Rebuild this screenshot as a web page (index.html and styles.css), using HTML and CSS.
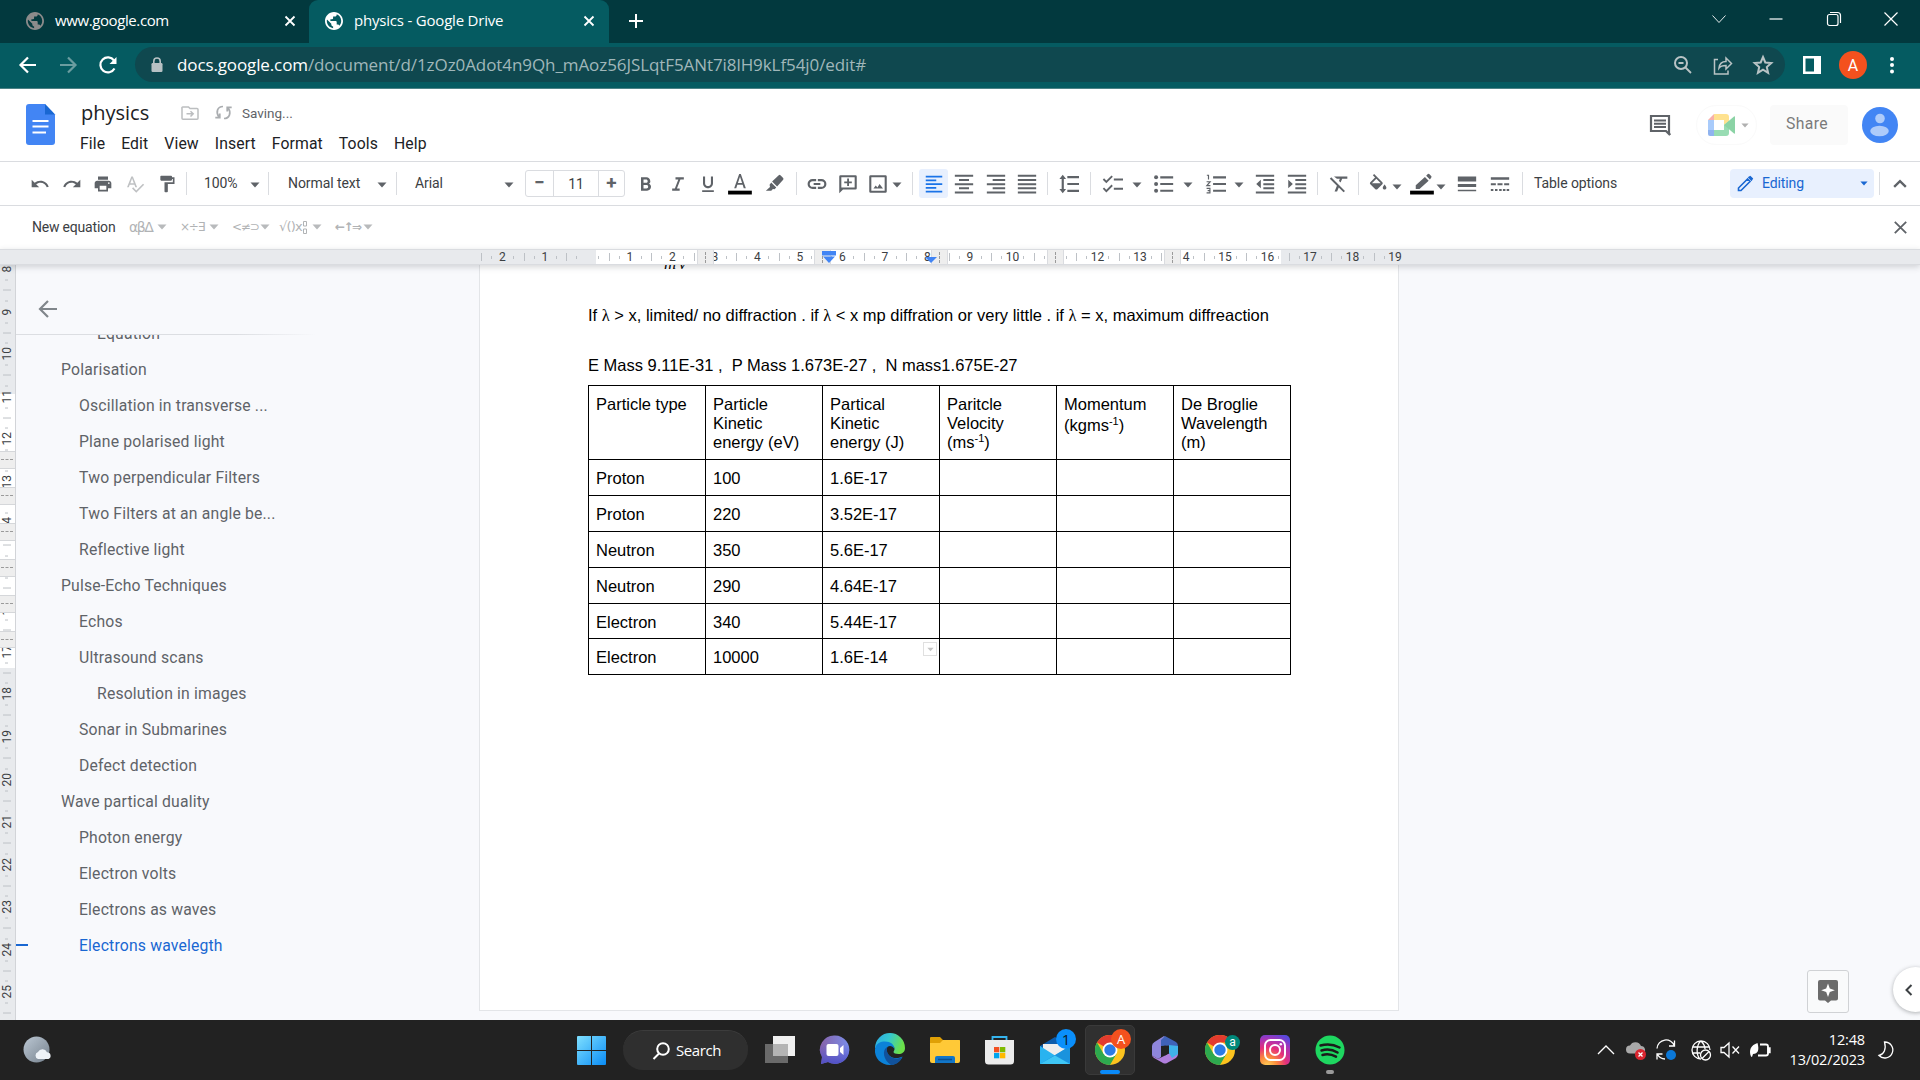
FILE: index.html
```html
<!DOCTYPE html>
<html lang="en">
<head>
<meta charset="utf-8">
<title>physics - Google Drive</title>
<link rel="stylesheet" href="styles.css">
</head>
<body>
<svg class="sprite" aria-hidden="true">
  <symbol id="globe" viewBox="2 2 20 20"><path fill="currentColor" d="M12 2C6.480 2 2 6.480 2 12s4.480 10 10 10 10-4.480 10-10S17.520 2 12 2zm-1 17.930c-3.950-.49-7-3.850-7-7.930 0-.62.080-1.210.210-1.790L9 15v1c0 1.100.9 2 2 2v1.930zm6.900-2.540c-.26-.81-1-1.390-1.900-1.390h-1v-3c0-.55-.45-1-1-1H8v-2h2c.55 0 1-.45 1-1V7h2c1.100 0 2-.9 2-2v-.41c2.930 1.190 5 4.060 5 7.410 0 2.080-.8 3.970-2.100 5.390z"/></symbol>
  <symbol id="caret" viewBox="0 0 10 6"><path d="M0.500 0.500h9L5 5.500z" fill="currentColor"/></symbol>
  <symbol id="chrome" viewBox="0 0 30 30"><circle cx="15" cy="15" r="15" fill="#fcc31e"/><path d="M15 15 2 7.500A15 15 0 0 1 28 7.500H15z" fill="#e33b2e"/><path d="M2 7.500A15 15 0 0 0 15 30l6.500-11.200L15 15 8.500 18.800z" fill="#2da94f"/><circle cx="15" cy="15" r="7.500" fill="#fff"/><circle cx="15" cy="15" r="5.700" fill="#2c7be5"/></symbol>
</svg>

<header class="tabstrip">
  <div class="tab">
    <svg class="favicon dim"><use href="#globe"/></svg><span class="tab-title">www.google.com</span>
    <svg class="tab-close" viewBox="0 0 10 10"><path d="M.5.5l9 9M9.500.5l-9 9"/></svg>
  </div>
  <div class="tab active">
    <svg class="favicon"><use href="#globe"/></svg><span class="tab-title">physics - Google Drive</span>
    <svg class="tab-close" viewBox="0 0 10 10"><path d="M.5.5l9 9M9.500.5l-9 9"/></svg>
  </div>
  <svg class="new-tab" viewBox="0 0 14 14"><path d="M7 0v14M0 7h14"/></svg>
  <div class="window-controls">
    <svg viewBox="0 0 16 16"><path d="M1.500 4.500 8 11.500l6.500-7"/></svg>
    <svg viewBox="0 0 16 16"><path d="M1.500 8h13"/></svg>
    <svg viewBox="0 0 16 16"><rect x="1.500" y="3.500" width="10.500" height="11" rx="2"/><path d="M4 1.500h7.500a3 3 0 0 1 3 3V12"/></svg>
    <svg viewBox="0 0 16 16"><path d="M1.500 1.500l13 13M14.500 1.500l-13 13"/></svg>
  </div>
</header>

<div class="addressbar">
  <svg class="nav" viewBox="0 0 20 20"><path d="M18 10H3M10 2.500 2.500 10l7.500 7.500"/></svg>
  <svg class="nav faded" viewBox="0 0 20 20"><path d="M2 10h15M10 2.500 17.500 10 10 17.500"/></svg>
  <svg class="nav" viewBox="0 0 20 20"><path d="M16.500 13.500A7.500 7.500 0 1 1 16 5.500"/><path d="M18.500 2v7h-7z" fill="#fff" stroke="none"/></svg>
  <div class="omnibox">
    <svg class="lock" viewBox="0 0 12 16"><path d="M2.800 7V4.200a3.200 3.200 0 0 1 6.400 0V7" fill="none" stroke="#b7c1c4" stroke-width="1.600"/><rect x=".5" y="6" width="11" height="9" rx="1.200" fill="#b7c1c4"/></svg>
    <span class="url"><b>docs.google.com</b>/document/d/1zOz0Adot4n9Qh_mAoz56JSLqtF5ANt7i8lH9kLf54j0/edit#</span>
    <div class="omni-icons">
      <svg viewBox="0 0 20 20"><circle cx="8" cy="8" r="6"/><path d="M12.500 12.500 18 18M5.500 8h5" stroke-width="1.800"/></svg>
      <svg viewBox="0 0 20 20"><path d="M5 4.500H1.500V19H15v-3.500M6 13c.5-4.500 3-6.500 7-6.500V3l5.500 5.500L13 14v-3.500c-3.500 0-5.500.5-7 2.500z" stroke-width="1.500"/></svg>
      <svg viewBox="0 0 20 20"><path d="M10 2l2.300 5.500 6 .5-4.500 4 1.300 5.800L10 14.700l-5.100 3.100L6.200 12 1.700 8l6-.5z"/></svg>
    </div>
  </div>
  <svg class="panel-icon" viewBox="0 0 18 18"><path d="M0 0h18v18H0zM2.500 2.500v13H11v-13z" fill="#fff" fill-rule="evenodd"/></svg>
  <span class="profile">A</span>
  <svg class="dots" viewBox="0 0 4 18"><circle cx="2" cy="3" r="2"/><circle cx="2" cy="9" r="2"/><circle cx="2" cy="15.500" r="2"/></svg>
</div>

<section class="doc-header">
  <svg class="docs-logo" viewBox="0 0 29 41"><path d="M3 0h16l10 10.500V38a3 3 0 0 1-3 3H3a3 3 0 0 1-3-3V3a3 3 0 0 1 3-3z" fill="#4285f4"/><path d="M19 0l10 10.500H19z" fill="#1967d2"/><path d="M6.500 17H22.500M6.500 22.500H22.500M6.500 28.500H20" stroke="#fff" stroke-width="2.200"/></svg>
  <div class="title-block">
    <div class="title-row">
      <span class="doc-title">physics</span>
      <svg class="move-icon" viewBox="0 0 18 14"><path d="M1 2.500V12.200a1 1 0 0 0 1 1h14a1 1 0 0 0 1-1V3.500a1 1 0 0 0-1-1H9L7.500 1H2a1 1 0 0 0-1 1.500zM5.500 7.800h6.500M9.500 5.200 12.200 7.800 9.500 10.500"/></svg>
      <svg class="sync-icon" viewBox="0 0 17 15"><path d="M8 1.500C2.500 1.500.5 7 3.800 12M0.300 12.700h4.500v-4.200M9 13.500c5.500 0 7.500-5.500 4.200-10.500M16.700 2.300h-4.500v4.200"/></svg>
      <span class="saving">Saving...</span>
    </div>
    <nav class="menus"><span>File</span><span>Edit</span><span>View</span><span>Insert</span><span>Format</span><span>Tools</span><span>Help</span></nav>
  </div>
  <div class="header-actions">
    <svg class="comments" viewBox="0 0 24 24"><path d="M22 22l-4-4H3V3h18v17z" fill="none" stroke="#5f6368" stroke-width="2.200"/><path d="M6 7.500h12M6 10.700h12M6 14h12" stroke="#5f6368" stroke-width="2"/></svg>
    <div class="meet">
      <svg class="meet-logo" viewBox="0 0 27 22"><path d="M6 0v6H0z" fill="#f8b0aa"/><path d="M6 0h12a3 3 0 0 1 3 3v4l-5 4V6H6z" fill="#ffe28f"/><path d="M0 6h6v10H0z" fill="#a9cbfb"/><path d="M0 16h6v6H2a2 2 0 0 1-2-2z" fill="#8fb3ef"/><path d="M6 16h10v-5l5-4v12a3 3 0 0 1-3 3H6z" fill="#98dcb3"/><path d="M16 11l10-8.500q1-.5 1 .5v16q0 1-1 .5z" fill="#8bd3a5"/></svg>
      <svg class="caret-s"><use href="#caret"/></svg>
    </div>
    <button class="share">Share</button>
    <svg class="avatar" viewBox="0 0 36 36"><circle cx="18" cy="18" r="18" fill="#4285f4"/><circle cx="18" cy="11.500" r="4.800" fill="#aecbfa"/><ellipse cx="17.500" cy="24" rx="9.300" ry="5.200" fill="#aecbfa"/></svg>
  </div>
</section>

<div class="toolbar">
  <svg class="ic" viewBox="0 0 24 24"><path d="M12.500 8c-2.650 0-5.050.99-6.900 2.600L2 7v9h9l-3.620-3.620c1.390-1.160 3.160-1.880 5.120-1.880 3.540 0 6.550 2.310 7.600 5.500l2.370-.78C21.080 11.030 17.150 8 12.500 8z"/></svg>
  <svg class="ic" viewBox="0 0 24 24"><path d="M18.400 10.600C16.550 8.990 14.150 8 11.500 8c-4.650 0-8.580 3.030-9.960 7.220L3.900 16c1.050-3.190 4.050-5.500 7.600-5.500 1.950 0 3.730.72 5.120 1.880L13 16h9V7l-3.600 3.600z"/></svg>
  <svg class="ic" viewBox="0 0 24 24"><path d="M19 8H5c-1.660 0-3 1.340-3 3v6h4v4h12v-4h4v-6c0-1.660-1.340-3-3-3zm-3 11H8v-5h8v5zm3-7c-.55 0-1-.45-1-1s.45-1 1-1 1 .45 1 1-.45 1-1 1zm-1-9H6v4h12V3z"/></svg>
  <svg class="ic light" viewBox="0 0 24 24"><path d="M12.450 16h2.090L9.430 3H7.570L2.460 16h2.090l1.120-3h5.640l1.140 3zm-6.020-5L8.500 5.480 10.570 11H6.430zm15.160.59l-8.090 8.090L9.830 16l-1.410 1.410 5.090 5.090L23 13l-1.410-1.410z"/></svg>
  <svg class="ic" viewBox="0 0 24 24"><path d="M18 4V3c0-.55-.45-1-1-1H5c-.55 0-1 .45-1 1v4c0 .55.450 1 1 1h12c.55 0 1-.45 1-1V6h1v4H9v11c0 .55.450 1 1 1h2c.55 0 1-.45 1-1v-9h8V4h-3z"/></svg>
  <i class="div"></i>
  <span>100%</span><svg class="caret"><use href="#caret"/></svg>
  <i class="div"></i>
  <span>Normal text</span><svg class="caret"><use href="#caret"/></svg>
  <i class="div"></i>
  <span>Arial</span><svg class="caret"><use href="#caret"/></svg>
  <div class="size-box"><b>−</b><span>11</span><b>+</b></div>
  <svg class="ic" viewBox="0 0 24 24"><path d="M15.600 11.800c1-.7 1.600-1.800 1.600-2.800 0-2.800-2-5-4.700-5H6v16h7.300c2.700 0 4.700-2.200 4.700-4.700 0-1.500-.9-2.800-2.400-3.500zM9 6.600h3c1.200 0 2 .8 2 2s-.8 2-2 2H9zm3.600 10.700H9v-4h3.600c1.200 0 2 .8 2 2s-.8 2-2 2z"/></svg>
  <svg class="ic" viewBox="0 0 24 24"><path d="M9 4v2.600h3.400L8.200 17.400H5V20h9v-2.600h-3.300l4.200-10.800H19V4z"/></svg>
  <svg class="ic" viewBox="0 0 24 24"><path d="M12 17c3.310 0 6-2.690 6-6V3h-2.500v8c0 1.930-1.570 3.500-3.500 3.500S8.500 12.930 8.500 11V3H6v8c0 3.310 2.690 6 6 6zm-7 2.500v2h14v-2H5z"/></svg>
  <svg class="ic bar" viewBox="0 0 24 24"><path d="M11 0L5 17h2.500l1.300-4h6.400l1.300 4H19L13 0h-2zm-1.500 10.700L12 3.200l2.500 7.500z"/><path d="M-2.300 20h28.500v4.600H-2.300z" fill="#000"/></svg>
  <svg class="ic" viewBox="0 0 24 24"><path d="M21.500 4.500 18.500 1.500q-1-1-2 0L8.500 9l6 6 7.300-8.200q1-1.200-.3-2.300zM7.500 10.200 5.500 13l.5 2.500L1 20h6.500l2-2 2 .3 2-2.200z"/></svg>
  <i class="div"></i>
  <svg class="ic" viewBox="0 0 24 24"><path d="M3.300 12c0-1.900 1.500-3.400 3.400-3.400H11V6H6.700a6 6 0 0 0 0 12H11v-2.600H6.700A3.400 3.400 0 0 1 3.300 12zM8 13.200h8v-2.400H8zM17.300 6H13v2.600h4.300a3.400 3.400 0 0 1 0 6.800H13V18h4.300a6 6 0 0 0 0-12z"/></svg>
  <svg class="ic" viewBox="0 0 24 24"><path d="M3 1.500h18a1.500 1.500 0 0 1 1.500 1.500v14a1.500 1.500 0 0 1-1.500 1.500H6L1.500 23V3A1.500 1.500 0 0 1 3 1.500zm1 2.300v12.400h16V3.800zM11 5.500h2.200v3.400h3.400V11h-3.400v3.500H11V11H7.500V8.900H11z" fill-rule="evenodd"/></svg>
  <svg class="ic" viewBox="0 0 24 24"><path d="M3.500 1.500h17A1.700 1.700 0 0 1 22.500 3v18a1.700 1.700 0 0 1-2 1.500h-17A1.700 1.700 0 0 1 1.500 21V3a1.700 1.700 0 0 1 2-1.500zM4 4v16h16V4zm2.500 13.500 2.800-3.800 2 2.400 2.600-4L18 17.500z" fill-rule="evenodd"/></svg>
  <svg class="caret"><use href="#caret"/></svg>
  <i class="div"></i>
  <div class="pressed"><svg class="ic" viewBox="0 0 24 24"><path d="M1 1h22v2.400H1zM1 6h14v2.400H1zM1 11h22v2.400H1zM1 16h14v2.400H1zM1 21h22v2.400H1z"/></svg></div>
  <svg class="ic" viewBox="0 0 24 24"><path d="M1 1h22v2.400H1zM6 6h12v2.400H6zM1 11h22v2.400H1zM6 16h12v2.400H6zM1 21h22v2.400H1z"/></svg>
  <svg class="ic" viewBox="0 0 24 24"><path d="M1 1h22v2.400H1zM8 6h15v2.400H8zM1 11h22v2.400H1zM8 16h15v2.400H8zM1 21h22v2.400H1z"/></svg>
  <svg class="ic" viewBox="0 0 24 24"><path d="M1 1h22v2.400H1zM1 6h22v2.400H1zM1 11h22v2.400H1zM1 16h22v2.400H1zM1 21h22v2.400H1z"/></svg>
  <i class="div"></i>
  <svg class="ic" viewBox="0 0 24 24"><path d="M4.500 1 .5 6h2.700v12H.5l4 5 4-5H5.800V6h2.700zM10 2.500h14V5H10zM10 10.700h14v2.500H10zM10 19h14v2.500H10z"/></svg>
  <i class="div"></i>
  <svg class="ic" viewBox="0 0 24 24"><path d="M13 5.500h11v2.300H13zM13 16.500h11v2.300H13z"/><path d="M.5 6l3.500 3.500L11 2.500M.5 17l3.500 3.500 7-7" fill="none" stroke="currentColor" stroke-width="2.200"/></svg>
  <svg class="caret"><use href="#caret"/></svg>
  <svg class="ic" viewBox="0 0 24 24"><circle cx="2.500" cy="4" r="2.400"/><circle cx="2.500" cy="12" r="2.400"/><circle cx="2.500" cy="20" r="2.400"/><path d="M7.500 2.800H23v2.500H7.500zM7.500 10.800H23v2.500H7.500zM7.500 18.800H23v2.500H7.500z"/></svg>
  <svg class="caret"><use href="#caret"/></svg>
  <svg class="ic" viewBox="0 0 24 24"><path d="M8.500 2.800H24v2.500H8.500zM8.500 10.800H24v2.500H8.500zM8.500 18.800H24v2.500H8.500z"/><path d="M1 1.500h2V6.500M.7 9.300H5L1 14h4.300M.7 17.300h4v5.400h-4M2 20h2.500" fill="none" stroke="currentColor" stroke-width="1.400"/></svg>
  <svg class="caret"><use href="#caret"/></svg>
  <svg class="ic" viewBox="0 0 24 24"><path d="M1 1h22v2.400H1zM10 6h13v2.400H10zM10 11h13v2.400H10zM10 16h13v2.400H10zM1 21h22v2.400H1zM7 7v10L1.500 12z"/></svg>
  <svg class="ic" viewBox="0 0 24 24"><path d="M1 1h22v2.400H1zM10 6h13v2.400H10zM10 11h13v2.400H10zM10 16h13v2.400H10zM1 21h22v2.400H1zM1.500 7v10L7 12z"/></svg>
  <i class="div"></i>
  <svg class="ic" viewBox="0 0 24 24"><path d="M6 3h16v2.700h-6.200l-1.900 4.500L12 8.300l1-2.600h-3.500zM2.700 4 1 5.700l8.500 8.400L6.700 21h3l2-4.800L17.500 22l1.700-1.700z"/></svg>
  <i class="div"></i>
  <svg class="ic" viewBox="0 0 24 24"><path d="M16.560 8.940L7.620 0 6.210 1.410l2.380 2.380-5.150 5.150c-.59.59-.59 1.540 0 2.120l5.500 5.500c.29.290.680.440 1.060.44s.770-.15 1.060-.44l5.500-5.500c.59-.58.590-1.530 0-2.120zM5.210 10L10 5.210 14.790 10zM19 11.500s-2 2.170-2 3.500c0 1.100.9 2 2 2s2-.9 2-2c0-1.330-2-3.500-2-3.500z" transform="translate(-1 0) scale(1.100)"/></svg>
  <svg class="caret low"><use href="#caret"/></svg>
  <svg class="ic bar" viewBox="0 0 24 24"><path d="M15.500 3.500 20 8 9 18H4.500v-4.500zM17 2l2-2q1-.7 2 .3L23 2.500q1 1 0 2L21.500 6.500z"/><path d="M-2.300 20h28.500v4.600H-2.300z" fill="#000"/></svg>
  <svg class="caret low"><use href="#caret"/></svg>
  <svg class="ic" viewBox="0 0 24 24"><path d="M1 3h22v6H1zM1 12h22v3.500H1zM1 19h22v1.800H1z"/></svg>
  <svg class="ic" viewBox="0 0 24 24"><path d="M1 4h22v3H1zM1 11h6v2.500H1zM9 11h6v2.500H9zM17 11h6v2.500h-6zM1 18h3v2.500H1zM6 18h3v2.500H6zM11 18h3v2.500h-3zM15.500 18h3v2.500h-3zM20 18h3v2.500h-3z"/></svg>
  <i class="div"></i>
  <span>Table options</span>
  <div class="mode">
    <svg viewBox="0 0 16 16"><path d="M10.500 3 1.500 12v2.500H4l9-9zM12 1.500l1.200-.8 2 2-.8 1.300z"/></svg><span>Editing</span><svg class="caret-s"><use href="#caret"/></svg>
  </div>
  <i class="div"></i>
  <svg class="ic" viewBox="0 0 24 24"><path d="M5 15.500l7-7 7 7" fill="none" stroke="currentColor" stroke-width="2.800"/></svg>
</div>

<div class="equation-bar">
  <span class="new-eq">New equation</span>
  <span class="pal">αβΔ</span><svg class="caret"><use href="#caret"/></svg>
  <span class="pal tight">×÷∃</span><svg class="caret"><use href="#caret"/></svg>
  <span class="pal tight">&lt;≠⊃</span><svg class="caret"><use href="#caret"/></svg>
  <span class="pal root">√()x<svg class="boxes" viewBox="0 0 4 13"><path d="M.5.5h3v4.500h-3zM.5 8h3v4.500h-3z"/></svg></span><svg class="caret"><use href="#caret"/></svg>
  <span class="pal bold">←↑⇒</span><svg class="caret"><use href="#caret"/></svg>
  <svg class="eq-close" viewBox="0 0 13 13"><path d="M.8.8l11.400 11.400M12.200.8.8 12.200"/></svg>
</div>

<div class="hruler">
  <span>2</span><span>1</span><span></span><span>1</span><span>2</span><span>3</span><span>4</span><span>5</span><span>6</span><span>7</span><span>8</span><span>9</span><span>10</span><span></span><span>12</span><span>13</span><span class="fourteen">4</span><span>15</span><span>16</span><span>17</span><span>18</span><span class="end">19</span>
  <i class="col-mark m1"></i><i class="col-mark m2"></i><i class="col-mark m3"></i><i class="col-mark m4"></i><i class="col-mark m5"></i>
  <svg class="indent-l" viewBox="0 0 14 12"><path d="M0 0h14v4.500H0zM1 5.500h12L7 12z"/></svg>
  <svg class="indent-r" viewBox="0 0 12 6"><path d="M0 0h12L6 6z"/></svg>
</div>

<main class="workspace">
  <div class="vruler">
    <span>8</span><span>9</span><span>10</span><span>11</span><span>12</span><span>13</span><span>14</span><span></span><span>16</span><span>17</span><span>18</span><span>19</span><span>20</span><span>21</span><span>22</span><span>23</span><span>24</span><span>25</span><span></span>
    <div class="row-marks"><i></i><i></i><i></i><i></i><i></i><i></i></div>
  </div>
  <aside class="outline">
    <div class="outline-head"><svg viewBox="0 0 20 20"><path d="M19 10H2.500M10 2 2 10l8 8"/></svg></div>
    <ul>
      <li class="l3">Equation</li>
      <li class="l1">Polarisation</li>
      <li class="l2">Oscillation in transverse ...</li>
      <li class="l2">Plane polarised light</li>
      <li class="l2">Two perpendicular Filters</li>
      <li class="l2">Two Filters at an angle be...</li>
      <li class="l2">Reflective light</li>
      <li class="l1">Pulse-Echo Techniques</li>
      <li class="l2">Echos</li>
      <li class="l2">Ultrasound scans</li>
      <li class="l3">Resolution in images</li>
      <li class="l2">Sonar in Submarines</li>
      <li class="l2">Defect detection</li>
      <li class="l1">Wave partical duality</li>
      <li class="l2">Photon energy</li>
      <li class="l2">Electron volts</li>
      <li class="l2">Electrons as waves</li>
      <li class="l2 current">Electrons wavelegth</li>
    </ul>
  </aside>
  <article class="page">
    <div class="formula">mv</div>
    <p class="rule">If <i>λ</i> &gt; x, limited/ no diffraction . if <i>λ</i> &lt; x mp diffration or very little . if <i>λ</i> = x, maximum diffreaction</p>
    <p class="masses">E Mass 9.11E-31 ,&nbsp; P Mass 1.673E-27 ,&nbsp; N mass1.675E-27</p>
    <table>
      <tr class="head"><td>Particle type</td><td>Particle<br>Kinetic<br>energy (eV)</td><td>Partical<br>Kinetic<br>energy (J)</td><td>Paritcle<br>Velocity<br>(ms<sup>-1</sup>)</td><td>Momentum<div class="drop">(kgms<sup>-1</sup>)</div></td><td>De Broglie<br>Wavelength<br>(m)</td></tr>
      <tr><td>Proton</td><td>100</td><td>1.6E-17</td><td></td><td></td><td></td></tr>
      <tr><td>Proton</td><td>220</td><td>3.52E-17</td><td></td><td></td><td></td></tr>
      <tr><td>Neutron</td><td>350</td><td>5.6E-17</td><td></td><td></td><td></td></tr>
      <tr><td>Neutron</td><td>290</td><td>4.64E-17</td><td></td><td></td><td></td></tr>
      <tr class="short"><td>Electron</td><td>340</td><td>5.44E-17</td><td></td><td></td><td></td></tr>
      <tr><td>Electron</td><td>10000</td><td class="active-cell">1.6E-14<span class="cell-menu"><svg><use href="#caret"/></svg></span></td><td></td><td></td><td></td></tr>
    </table>
  </article>
  <button class="explore"><svg viewBox="0 0 20 23"><path d="M2 0h16a2 2 0 0 1 2 2v16.500a2 2 0 0 1-2 2h-5L10 23l-3-2.500H2a2 2 0 0 1-2-2V2a2 2 0 0 1 2-2z" fill="#6b6b6b"/><path d="M10 3.500l1.800 5 5 1.800-5 1.800-1.800 5-1.800-5-5-1.800 5-1.800z" fill="#fff"/></svg></button>
  <button class="side-toggle"><svg viewBox="0 0 8 12"><path d="M6.500 1 1.500 6l5 5"/></svg></button>
</main>

<footer class="taskbar">
  <svg class="weather" viewBox="0 0 30 28"><defs><linearGradient id="w" x1="0" y1="0" x2="1" y2="1"><stop offset="0" stop-color="#bcc8d4"/><stop offset="1" stop-color="#75818d"/></linearGradient></defs><circle cx="14.500" cy="13.500" r="13" fill="url(#w)"/><path d="M16 23a3.700 3.700 0 0 1 0-7 5 5 0 0 1 9 .3 3.500 3.500 0 0 1 1.500 6.700z" fill="#eef3f8"/></svg>
  <div class="apps">
    <span class="app"><svg viewBox="0 0 30 30"><defs><linearGradient id="win" x1="0" y1="0" x2="1" y2="1"><stop offset="0" stop-color="#7fe0ff"/><stop offset="1" stop-color="#0a8cf5"/></linearGradient></defs><path d="M0 2q0-1 1-1h13v14H0zM15 1h13q1 0 1 1v13H15zM0 16h14v14H1q-1 0-1-1zM15 16h14v13q0 1-1 1H15z" fill="url(#win)"/></svg></span>
    <div class="search"><svg viewBox="0 0 18 18"><circle cx="11" cy="7" r="5.800"/><path d="M7 11.500 1.500 17"/></svg><span>Search</span></div>
    <span class="app"><svg viewBox="0 0 30 30"><path d="M8 1h22v20H8z" fill="#f0f0f0"/><path d="M0 9h23v19H0z" fill="#6a6a6a"/><path d="M8 9h15v12H8z" fill="#b4b4b4"/></svg></span>
    <span class="app"><svg viewBox="0 0 30 30"><defs><linearGradient id="ch" x1="0" y1="0" x2="1" y2="0"><stop offset="0" stop-color="#8761a8"/><stop offset="1" stop-color="#7a8eea"/></linearGradient><linearGradient id="ch2" x1="0" y1="0" x2="0" y2="1"><stop offset=".3" stop-color="#5a58d0" stop-opacity="0"/><stop offset="1" stop-color="#4f50c6"/></linearGradient></defs><path d="M15 .5a14.200 14.200 0 1 1-7 26.500L1 29l1-7A14.200 14.200 0 0 1 15 .5z" fill="url(#ch)"/><path d="M15 .5a14.200 14.200 0 1 1-7 26.500L1 29l1-7A14.200 14.200 0 0 1 15 .5z" fill="url(#ch2)"/><rect x="6.500" y="9" width="12" height="12" rx="2" fill="#fff"/><path d="M20 13l3.500-3v10L20 17z" fill="#fff"/></svg></span>
    <span class="app"><svg viewBox="0 0 30 30"><defs><linearGradient id="ed" x1="0" y1="0" x2="1" y2=".3"><stop offset="0" stop-color="#2ba8e8"/><stop offset=".5" stop-color="#35c8cf"/><stop offset="1" stop-color="#6be04a"/></linearGradient></defs><path d="M0 13A15 15 0 0 1 30 13c0 4-3 6-6.500 6-3 0-5-1-5-2 0-.8 1-1.200 1-3 0-2.500-2-4-5-4z" fill="url(#ed)"/><path d="M0 14C1 8 6 6.500 10 6.500c5.500 0 9.500 3 9.500 7.500-1-2-3-3-4.500-3-3 0-4 3-3 6 1.500 4 5 6 9 6 3 0 5-.7 6.500-1.500C25 27 20 30 15 30 6 30-1 23 0 14z" fill="#0c82d8"/><path d="M12 12c-5 3-4 13 4 17.900C21 30 25 27 27.500 22c-5 2.500-11 2-14-2.500-2-3-1.800-5-1.500-7.500z" fill="#11529c"/></svg></span>
    <span class="app"><svg viewBox="0 0 30 30"><path d="M0 3q0-1 1-1h9l3 3h16q1 0 1 1v5H0z" fill="#e0a006"/><path d="M0 8h10l3-3h16q1 0 1 1v20q0 2-2 2H2q-2 0-2-2z" fill="#ffc937"/><path d="M5 28v-5q0-2 2-2h16q2 0 2 2v5z" fill="#1276c8"/><path d="M8 24.500h14" stroke="#0a4f8f" stroke-width="1.500"/></svg></span>
    <span class="app"><svg viewBox="0 0 30 30"><path d="M7.500 6V2h14v4" fill="none" stroke="#35b5ef" stroke-width="1.800"/><path d="M0 5h29v21q0 3.500-3.500 3.500h-22Q0 29.500 0 26z" fill="#ececec"/><path d="M9 12h5.300v5.300H9z" fill="#f25022"/><path d="M15 12h5.300v5.300H15z" fill="#7fba00"/><path d="M9 18h5.300v5.300H9z" fill="#00a4ef"/><path d="M15 18h5.300v5.300H15z" fill="#ffb900"/></svg></span>
    <span class="app"><svg viewBox="0 0 30 30"><path d="M0 11 15 2l15 9v5H0z" fill="#0d5cab"/><path d="M3 9h24v8L15 22 3 14z" fill="#eee"/><path d="M0 11l15 9.500L30 11v18H0z" fill="#29b3f0"/><path d="M0 29 30 11v18z" fill="#1a93dd"/><path d="M0 29l30-.1L15 20.500z" fill="#3fc6f5"/></svg><em class="badge blue">1</em></span>
    <span class="app running active"><svg><use href="#chrome"/></svg><em class="badge orange">A</em></span>
    <span class="app"><svg viewBox="0 0 30 30"><path d="M14 1 4.500 7Q2 8.500 2 11v9.500L8 24l3-2V11l8-5.500z" fill="#8f86dc"/><path d="M15 1l11 6q2 1.500 2 4v8l-6-4-3-4.500L11 11V5z" fill="#3f62b8"/><path d="M2 20.500 8 24l12-6 8-5v6q0 2.500-2 4l-9 5q-2 1-4 0l-9-5q-2-1.500-2-3z" fill="#b07fdd"/><path d="M28 11v8l-6 4-3-5V10z" fill="#3fb2ea"/><path d="M15 10.500l4 2.500v5l-4 2.500-4-2.500v-5z" fill="#222"/></svg></span>
    <span class="app"><svg><use href="#chrome"/></svg><em class="badge teal">a</em></span>
    <span class="app"><svg viewBox="0 0 30 30"><defs><radialGradient id="ig" cx=".25" cy="1.050" r="1.150"><stop offset="0" stop-color="#ffd65a"/><stop offset=".28" stop-color="#fb8a3c"/><stop offset=".55" stop-color="#e5307a"/><stop offset=".8" stop-color="#a934b8"/><stop offset="1" stop-color="#5a48dc"/></radialGradient></defs><rect width="30" height="30" rx="5" fill="url(#ig)"/><rect x="5" y="5" width="20" height="20" rx="5.500" fill="none" stroke="#fff" stroke-width="2"/><circle cx="15" cy="15" r="5" fill="none" stroke="#fff" stroke-width="2"/><circle cx="20.800" cy="9.300" r="1.300" fill="#fff"/></svg></span>
    <span class="app running"><svg viewBox="0 0 30 30"><circle cx="15" cy="15" r="14.500" fill="#1ed760"/><path d="M5.500 10.500c6-1.800 13-1.300 19 2M6.500 15.500c5-1.500 11-1 16 2M7.500 20c4.500-1.200 9-.8 13.500 1.700" fill="none" stroke="#1b1b1b" stroke-width="2.500" stroke-linecap="round"/></svg></span>
  </div>
  <div class="tray">
    <svg viewBox="0 0 20 20"><path d="M2 14l8-8 8 8"/></svg>
    <svg viewBox="0 0 20 20"><path d="M4 13.500a4 4 0 0 1 0-8 6 6 0 0 1 11 .5 4 4 0 0 1 2 7.500z" fill="#a9a9a9" stroke="none"/><circle cx="14.500" cy="14.500" r="5.500" fill="#d9252f" stroke="none"/><path d="M12.500 12.500l4 4M16.500 12.500l-4 4"/></svg>
    <svg viewBox="0 0 20 20"><path d="M1 8.500A9 9 0 0 1 18.500 6M18.500.5V6H13M1 19.500V14h5.500M1.500 14.500A9 9 0 0 0 9 19"/><circle cx="15" cy="15" r="5" fill="#0b78d8" stroke="none"/></svg>
    <svg viewBox="0 0 20 20"><path d="M10 19A9 9 0 1 1 19 10M1.500 7h17M1.500 13H9M10 1C5 5 5 15 9 19M10 1c3 3 4 5 4 8"/><circle cx="14.500" cy="15" r="5"/><path d="M11 18.500l7-7"/></svg>
    <svg viewBox="0 0 20 20"><path d="M1 7.500h3l5-4.500v14l-5-4.500H1zM12.500 6.500l6.500 7M19 6.500l-6.500 7"/></svg>
    <svg viewBox="0 0 20 20"><path d="M10 4.500h6q2 0 2 2v7q0 2-2 2H8" stroke-width="1.800"/><path d="M18 8h2v4.500h-2z" fill="#fff"/><path d="M1 16.500C-1.500 10 1 5 7.500 3c2 7 .5 11-4.500 11l-1 3z" fill="#fff" stroke="none"/></svg>
    <div class="clock"><span>12:48</span><span>13/02/2023</span></div>
    <svg viewBox="0 0 20 20"><path d="M8.500 2A8 8 0 1 1 3 15.500C8 14.500 10.500 9 8.500 2z"/></svg>
  </div>
</footer>
</body>
</html>
```
FILE: styles.css
```css
* { box-sizing: border-box; }
body {
  margin: 0;
  width: 1920px;
  height: 1080px;
  overflow: hidden;
  display: flex;
  flex-direction: column;
  background: #fff;
  font-family: Roboto, sans-serif;
  color: #3c4043;
}
.sprite { position: absolute; width: 0; height: 0; }
svg { display: block; flex: none; overflow: visible; }
button { border: 0; padding: 0; font: inherit; }

/* Browser tabs */
.tabstrip {
  height: 43px;
  flex: none;
  display: flex;
  align-items: center;
  background: #02393e;
  color: #fff;
  font: 15px "Open Sans", sans-serif;
}
.tab { display: flex; align-items: center; height: 43px; width: 309px; padding: 0 14px 2px 26px; }
.tab.active { width: 300px; padding: 0 15px 2px 16px; background: #055b61; border-radius: 9px 9px 0 0; }
.favicon { width: 18px; height: 18px; color: #fff; }
.favicon.dim { color: #8b8b8b; }
.tab-title { margin-left: 11px; letter-spacing: -0.4px; white-space: nowrap; padding-bottom: 2px; }
.tab.active .tab-title { letter-spacing: -0.2px; }
.tab-close { width: 10px; height: 10px; margin-left: auto; fill: none; stroke: #fff; stroke-width: 1.8; }
.new-tab { width: 14px; height: 14px; margin: 0 0 1px 20px; stroke: #fff; stroke-width: 2; }
.window-controls { display: flex; gap: 41.300px; margin: 0 21px 6px auto; }
.window-controls svg { width: 16px; height: 16px; fill: none; stroke: #fff; stroke-width: 1.200; }
.window-controls svg:first-child { stroke-width: .9; }

.addressbar {
  height: 46px;
  flex: none;
  display: flex;
  align-items: center;
  padding: 0 26px 2px 18px;
  background: #055b61;
  border-bottom: 1px solid #4c8286;
}
.nav { width: 20px; height: 20px; margin-right: 20px; fill: none; stroke: #fff; stroke-width: 2.200; }
.nav.faded { stroke: #6b9da0; }
.addressbar .nav:nth-child(3) { margin-right: 17px; }
.omnibox { width: 650px; flex: 1; height: 35px; border-radius: 18px; background: #0f484f; display: flex; align-items: center; padding: 0 12px 0 16px; }
.lock { width: 12px; height: 16px; }
.url { margin-left: 14px; font: 17px "Open Sans", sans-serif; letter-spacing: -0.080px; color: #a0b7ba; white-space: nowrap; }
.url b { font-weight: 400; color: #fff; letter-spacing: -0.120px; }
.omni-icons { display: flex; gap: 20px; margin-left: auto; }
.omni-icons svg { width: 20px; height: 20px; fill: none; stroke: #b9c3c5; stroke-width: 2; }
.panel-icon { width: 18px; height: 18px; margin-left: 18px; }
.profile { width: 28px; height: 28px; margin-left: 18px; border-radius: 50%; background: #f4511e; color: #fff; font-size: 16px; line-height: 29px; text-align: center; }
.dots { width: 4px; height: 18px; margin-left: 23px; fill: #fff; }

/* Document header */
.doc-header { height: 72px; flex: none; display: flex; padding-left: 26px; }
.docs-logo { width: 29px; height: 41px; margin-top: 15px; }
.title-block { margin-left: 25px; padding-top: 11px; }
.title-row { display: flex; align-items: center; height: 26px; }
.doc-title { width: 101px; padding: 0 0 1px 1px; font: 20px "Open Sans", sans-serif; color: #202124; }
.move-icon { width: 18px; height: 14px; margin-bottom: 1px; fill: none; stroke: #bcbec0; stroke-width: 1.500; }
.sync-icon { width: 17px; height: 15px; margin: 0 0 1px 16px; fill: none; stroke: #aaadb0; stroke-width: 1.700; }
.saving { margin-left: 10px; padding-bottom: 1px; font-size: 13.500px; color: #5f6368; }
.menus { display: flex; gap: 16px; margin-top: 8px; font-size: 15.750px; letter-spacing: .11px; line-height: 20px; color: #202124; }
.header-actions { display: flex; margin-left: auto; padding: 16px 22px 0 0; height: 56px; align-items: center; }
.comments { width: 24px; height: 24px; margin-bottom: 1px; }
.meet { width: 61px; height: 40px; margin-left: 24px; display: flex; align-items: center; border: 1px solid #fafafa; border-radius: 20px; padding-left: 11px; }
.meet-logo { width: 27px; height: 22px; }
.caret-s { width: 8px; height: 5px; color: #b0b0b0; margin-left: 6px; }
.share { width: 78px; height: 40px; margin-left: 13px; border-radius: 4px; background: #fafafa; color: #7a7a7a; font-size: 15.750px; letter-spacing: .4px; padding: 0 4px 3px 0; }
.avatar { width: 36px; height: 36px; margin-left: 14px; }

/* Formatting toolbar */
.toolbar {
  height: 45px;
  flex: none;
  display: grid;
  grid-template-columns: 32px 31px 32px 32px 29px 18px 46px 18px 20px 89px 19px 19px 89px 21px 111px 32px 30px 32px 35px 31px 11px 31px 30px 24px 20px 7px 35px 32px 31px 30px 12px 31px 13px 29px 22px 29px 23px 28px 21px 32px 30px 12px 29px 10px 24px 20px 24px 21px 33px 32px 12px 196px 149px 11px 20px;
  justify-items: start;
  align-items: center;
  padding-left: 30px;
  border-top: 1px solid #dadce0;
  border-bottom: 1px solid #dadce0;
  font-size: 14px;
}
.toolbar > span { white-space: nowrap; padding-bottom: 2px; letter-spacing: -0.080px; }
.ic { width: 20px; height: 20px; fill: currentColor; color: #5f6368; }
.ic.light { color: #bfc1c3; }
.caret { width: 10px; height: 6px; color: #5f6368; margin-top: 2px; }
.caret.low { margin-top: 7px; }
.div { width: 1px; height: 23px; background: #dadce0; }
.size-box { width: 100px; height: 27px; display: grid; grid-template-columns: 27px 46px 1fr; border: 1px solid #dadce0; border-radius: 3px; text-align: center; line-height: 24px; }
.size-box b { font-size: 19px; font-weight: 700; color: #5f6368; }
.size-box span { border: solid #dadce0; border-width: 0 1px; line-height: 26px; }
.pressed { width: 29px; height: 29px; border-radius: 3px; background: #e8f0fe; display: grid; place-items: center; }
.pressed .ic { width: 18px; color: #1a73e8; }
.mode { width: 144px; height: 29px; display: flex; align-items: center; border-radius: 4px; background: #e8f0fe; color: #1967d2; padding: 0 6px 0 7px; }
.mode span { padding-bottom: 2px; letter-spacing: -0.1px; }
.mode svg:first-child { width: 16px; height: 16px; margin-right: 9px; fill: none; stroke: #1967d2; stroke-width: 1.600; }
.mode .caret-s { margin-left: auto; color: #1967d2; }

.equation-bar {
  height: 43px;
  flex: none;
  display: grid;
  grid-template-columns: 97px 28px 23px 29px 23px 28px 19px 33px 23px 28px 1531px 14px;
  align-items: center;
  justify-items: start;
  padding: 0 0 1px 32px;
  font-size: 14px;
}
.new-eq { letter-spacing: -0.2px; }
.pal { display: flex; align-items: center; color: #b1b3b5; font: 14px/20px "DejaVu Sans", sans-serif; letter-spacing: -1.400px; white-space: nowrap; }
.pal.tight { font-size: 12px; letter-spacing: -1.200px; }
.pal.root { font-size: 13px; letter-spacing: -0.8px; }
.pal.bold { font-size: 12px; font-weight: 700; letter-spacing: -1.500px; }
.boxes { width: 4px; height: 13px; margin-left: 1px; fill: none; stroke: #b1b3b5; stroke-width: 1; }
.equation-bar .caret { color: #b8babc; margin-top: 0; }
.eq-close { width: 13px; height: 13px; fill: none; stroke: #5f6368; stroke-width: 1.800; }

/* Rulers: one cell per centimetre, centred on its number */
.hruler {
  position: relative;
  z-index: 2;
  height: 16px;
  flex: none;
  display: flex;
  padding-left: 481px;
  background: linear-gradient(90deg, #e8eaed 596px, #fff 596px, #fff 1281px, #e8eaed 1281px);
  border-top: 1px solid #dadce0;
  border-bottom: 1px solid #dadce0;
  box-shadow: 0 2px 6px rgba(60, 64, 67, .22);
  font-size: 12px;
  line-height: 15px;
}
.hruler span {
  width: 42.520px;
  flex: none;
  text-align: center;
  background:
    linear-gradient(#bdc1c6, #bdc1c6) 0 3px / 1px 8px no-repeat,
    linear-gradient(#bdc1c6, #bdc1c6) 10px 6px / 1px 3px no-repeat,
    linear-gradient(#bdc1c6, #bdc1c6) 32px 6px / 1px 3px no-repeat;
}
.hruler .end { background-size: 1px 8px, 1px 3px, 0 0; }
.hruler .fourteen { padding-left: 7px; }
.col-mark { position: absolute; top: 0; width: 17px; height: 14px; background: #eee; border: solid #dadce0; border-width: 0 1px; }
.col-mark::after { content: ""; position: absolute; left: 7px; top: 2px; height: 11px; border-left: 1px dashed #9a9a9a; }
.m1 { left: 697px; }
.m2 { left: 814px; }
.m3 { left: 931px; }
.m4 { left: 1047px; }
.m5 { left: 1164px; }
.indent-l { position: absolute; left: 822px; top: 1px; width: 14px; height: 12px; fill: #4285f4; }
.indent-r { position: absolute; left: 925px; top: 7px; width: 12px; height: 6px; fill: #4285f4; }

.workspace { position: relative; flex: 1; min-height: 0; display: flex; background: #f8f9fc; overflow: hidden; }
.vruler {
  position: relative;
  width: 16px;
  height: 755px;
  display: flex;
  flex-direction: column;
  background: linear-gradient(#e8eaed 129px, #fff 129px, #fff 403px, #e8eaed 403px);
  border-right: 1px solid #d2d4d8;
  font-size: 12px;
  overflow: hidden;
}
.vruler > span {
  flex: none;
  height: 42.520px;
  writing-mode: vertical-rl;
  transform: rotate(180deg);
  text-align: center;
  line-height: 15px;
  background:
    linear-gradient(#bdc1c6, #bdc1c6) 4px 0 / 8px 1px no-repeat,
    linear-gradient(#bdc1c6, #bdc1c6) 7px 10px / 3px 1px no-repeat,
    linear-gradient(#bdc1c6, #bdc1c6) 7px 32px / 3px 1px no-repeat;
}
.vruler > span:first-child { margin-top: -16.700px; }
.row-marks { position: absolute; left: 0; top: 186px; display: grid; gap: 18px; }
.row-marks i { position: relative; width: 15px; height: 18px; background: #eee; border: solid #d5d7da; border-width: 1px 0; }
.row-marks i:last-child { height: 17px; }
.row-marks i::after { content: ""; position: absolute; left: 1px; top: 7px; width: 12px; border-top: 1px dashed #9a9a9a; }

/* Document outline */
.outline { width: 463px; display: flex; flex-direction: column; overflow: hidden; color: #5f6368; font-size: 15.750px; letter-spacing: .17px; }
.outline-head { height: 70px; flex: none; padding: 34px 0 0 22px; border-bottom: 1px solid; border-image: linear-gradient(90deg, #dcdee2 220px, transparent 300px) 1; }
.outline-head svg { width: 20px; height: 20px; fill: none; stroke: #80868b; stroke-width: 2.200; }
.outline ul { list-style: none; margin: 0; padding: 0; overflow: hidden; }
.outline li { height: 36px; line-height: 36px; white-space: nowrap; position: relative; }
.outline li:first-child { margin-top: -19px; }
.l1 { padding-left: 45px; }
.l2 { padding-left: 63px; }
.l3 { padding-left: 81px; }
.outline .current { color: #1967d2; }
.current::before { content: ""; position: absolute; left: 0; top: 16px; width: 12px; height: 2px; background: #1967d2; }

/* Page */
.page { width: 920px; height: 746px; background: #fff; border: 1px solid #e3e5e8; border-top: 0; padding-left: 108px; color: #000; font: 16.500px/19px "Liberation Sans", Arial, sans-serif; }
.page p { margin: 0; white-space: pre; }
.formula { height: 20px; margin: -11px 0 0 76px; font: italic 17px/20px "Liberation Serif", serif; letter-spacing: 2.500px; }
.page .rule { margin-top: 32px; letter-spacing: -0.010px; }
.rule i { font: 16.500px/19px "Liberation Serif", serif; }
.page .masses { margin-top: 31px; }
table { border-collapse: collapse; table-layout: fixed; width: 703px; margin-top: 10px; }
td { height: 36px; padding: 9px 0 0 7px; border: 1px solid #000; vertical-align: top; line-height: 19px; white-space: nowrap; }
.head td { height: 74px; padding-top: 9px; }
.short td { height: 35px; }
sup { font-size: 11px; line-height: 0; vertical-align: 6px; }
.drop { padding-top: 2px; }
.active-cell { position: relative; }
.cell-menu { position: absolute; right: 2px; top: 3px; width: 14px; height: 14px; border: 1px solid #e0e0e0; background: #fff; display: grid; place-items: center; }
.cell-menu svg { width: 7px; height: 5px; color: #c4c4c4; }

.explore { position: absolute; left: 1807px; top: 705px; width: 42px; height: 43px; border: 1px solid #d0d2d5; border-radius: 3px; background: #f9fafb; display: grid; place-items: center; }
.explore svg { width: 20px; height: 23px; }
.side-toggle { position: absolute; left: 1893px; top: 702px; width: 45px; height: 45px; border-radius: 50%; background: #fff; box-shadow: 0 1px 4px rgba(60, 64, 67, .4); padding-left: 12px; }
.side-toggle svg { width: 8px; height: 12px; fill: none; stroke: #3c4043; stroke-width: 2; }

/* Windows taskbar */
.taskbar { position: relative; height: 60px; flex: none; display: flex; align-items: center; background: #222; color: #fff; font-family: "Open Sans", sans-serif; }
.weather { width: 30px; height: 28px; margin-left: 22px; }
.apps { display: flex; gap: 5px; margin-left: 515px; align-items: center; }
.app { position: relative; width: 50px; height: 50px; display: grid; place-items: center; border-radius: 5px; }
.app > svg { width: 30px; height: 30px; }
.app.active { background: #303030; border: 1px solid #3a3a3a; }
.running::after { content: ""; position: absolute; left: 21px; bottom: 1px; width: 8px; height: 4px; border-radius: 2px; background: #9a9a9a; }
.running.active::after { left: 14px; bottom: 0; width: 20px; background: #0a8bfa; }
.search { width: 125px; height: 40px; margin: 0 2px 0 1px; border-radius: 20px; background: #2f2f2f; border-top: 1px solid #3c3c3c; display: flex; align-items: center; padding-left: 29px; font-size: 15px; letter-spacing: -0.4px; }
.search span { padding-bottom: 2px; }
.search svg { width: 18px; height: 18px; margin-right: 6px; fill: none; stroke: #fff; stroke-width: 2; }
.badge { position: absolute; left: 26px; top: 4px; width: 20px; height: 20px; border-radius: 50%; font: 15px/20px "Open Sans", sans-serif; text-align: center; }
.blue { background: #0a8ffb; color: #0b1b2c; }
.orange { background: #f4511e; left: 25px; top: 3px; font-size: 13px; }
.teal { background: #00897b; width: 15px; height: 15px; left: 30px; top: 10px; font: 12px/14px Roboto, sans-serif; }
.tray { display: flex; align-items: center; margin-left: auto; padding-right: 24px; }
.tray svg { width: 20px; height: 20px; fill: none; stroke: #fff; stroke-width: 1.300; margin-right: 10px; }
.tray svg:nth-child(3) { margin-right: 15px; }
.tray svg:nth-child(4) { margin-right: 9px; }
.tray svg:nth-child(6) { margin-right: 0; }
.tray svg:last-child { margin-right: 0; }
.clock { width: 95px; margin-right: 11px; display: flex; flex-direction: column; align-items: flex-end; font-size: 14.500px; line-height: 20px; letter-spacing: -0.15px; white-space: nowrap; }
```
